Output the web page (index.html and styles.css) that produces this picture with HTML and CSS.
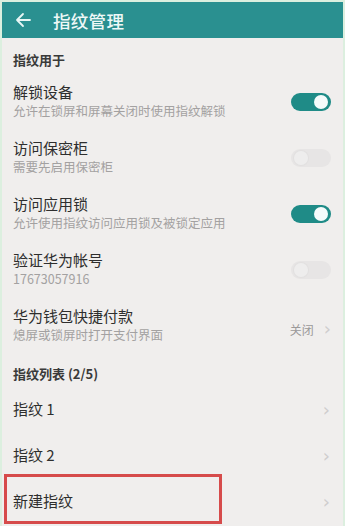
FILE: index.html
```html
<!DOCTYPE html>
<html lang="zh">
<head>
<meta charset="utf-8">
<link rel="stylesheet" href="styles.css">
</head>
<body>
<div class="frame">
  <header class="topbar">
    <svg class="back" width="16" height="16" viewBox="0 0 16 16"><path d="M15 8H2M8 2L2 8l6 6" fill="none" stroke="#e8f6f5" stroke-width="1.8" stroke-linecap="round" stroke-linejoin="round"/></svg>
    <span class="title">指纹管理</span>
  </header>
  <main class="content">
    <div class="section">指纹用于</div>
    <div class="row">
      <div class="texts"><div class="t">解锁设备</div><div class="s">允许在锁屏和屏幕关闭时使用指纹解锁</div></div>
      <span class="toggle on"><span class="knob"></span></span>
    </div>
    <div class="row">
      <div class="texts"><div class="t">访问保密柜</div><div class="s">需要先启用保密柜</div></div>
      <span class="toggle off"><span class="knob"></span></span>
    </div>
    <div class="row">
      <div class="texts"><div class="t">访问应用锁</div><div class="s">允许使用指纹访问应用锁及被锁定应用</div></div>
      <span class="toggle on"><span class="knob"></span></span>
    </div>
    <div class="row">
      <div class="texts"><div class="t">验证华为帐号</div><div class="s">17673057916</div></div>
      <span class="toggle off"><span class="knob"></span></span>
    </div>
    <div class="row">
      <div class="texts"><div class="t">华为钱包快捷付款</div><div class="s">熄屏或锁屏时打开支付界面</div></div>
      <span class="value">关闭<span class="chev">›</span></span>
    </div>
    <div class="section section2">指纹列表 (2/5)</div>
    <div class="item"><span class="t">指纹 1</span><span class="chev">›</span></div>
    <div class="item"><span class="t">指纹 2</span><span class="chev">›</span></div>
    <div class="item mark"><span class="t">新建指纹</span><span class="chev">›</span><span class="redbox"></span></div>
  </main>
</div>
</body>
</html>
```
FILE: styles.css
```css
html, body { margin: 0; padding: 0; }
body {
  background: #dcefdf;
  font-family: "Noto Sans CJK SC", "Noto Sans", sans-serif;
  width: 345px;
  height: 526px;
  overflow: hidden;
}
.frame {
  margin: 2px 2px 0 2px;
  height: 524px;
  background: #f0eeed;
  display: flex;
  flex-direction: column;
}
.topbar {
  height: 36px;
  background: #2a9090;
  display: flex;
  align-items: center;
  padding-left: 13px;
  gap: 22px;
}
.back { flex: none; }
.title {
  color: #eef8f7;
  font-size: 17.5px;
  font-weight: 500;
  letter-spacing: 0.3px;
}
.content { display: flex; flex-direction: column; }
.section {
  padding: 13px 11px 4px;
  font-size: 13px;
  line-height: 18px;
  font-weight: 700;
  color: #3a3a3a;
}
.section2 { padding: 12px 11px 3px; }
.row {
  height: 56px;
  box-sizing: border-box;
  padding: 10px 12px 10px 11px;
  display: flex;
  align-items: center;
  justify-content: space-between;
}
.texts { display: flex; flex-direction: column; }
.t {
  font-size: 15px;
  line-height: 18px;
  color: #2e2e2e;
}
.s {
  font-size: 12.5px;
  line-height: 18px;
  color: #a3a1a1;
  margin-top: 1px;
}
.toggle {
  width: 40px;
  height: 18px;
  border-radius: 9px;
  position: relative;
  margin-top: 1px;
}
.toggle.on { background: #1f8b87; }
.toggle.off { background: #e7e5e5; }
.knob {
  position: absolute;
  top: 2px;
  width: 14px;
  height: 14px;
  border-radius: 50%;
}
.on .knob { right: 3px; background: #f4fbfb; }
.off .knob { left: 3px; background: #eeeded; box-shadow: 0 0 0 1px #e2e0e0; }
.value {
  font-size: 12px;
  color: #9b9999;
  display: flex;
  align-items: center;
  gap: 10px;
  margin-top: 8px;
}
.chev {
  font-family: "DejaVu Sans", sans-serif;
  font-size: 18px;
  line-height: 18px;
  color: #cfcdcd;
}
.item {
  height: 46px;
  padding: 0 13px 0 11px;
  display: flex;
  align-items: center;
  justify-content: space-between;
  position: relative;
}
.item .chev { margin-top: 2px; }
.redbox {
  position: absolute;
  left: 2px;
  top: -4px;
  width: 218px;
  height: 50px;
  box-sizing: border-box;
  border: 3px solid #d64b4b;
}
```
